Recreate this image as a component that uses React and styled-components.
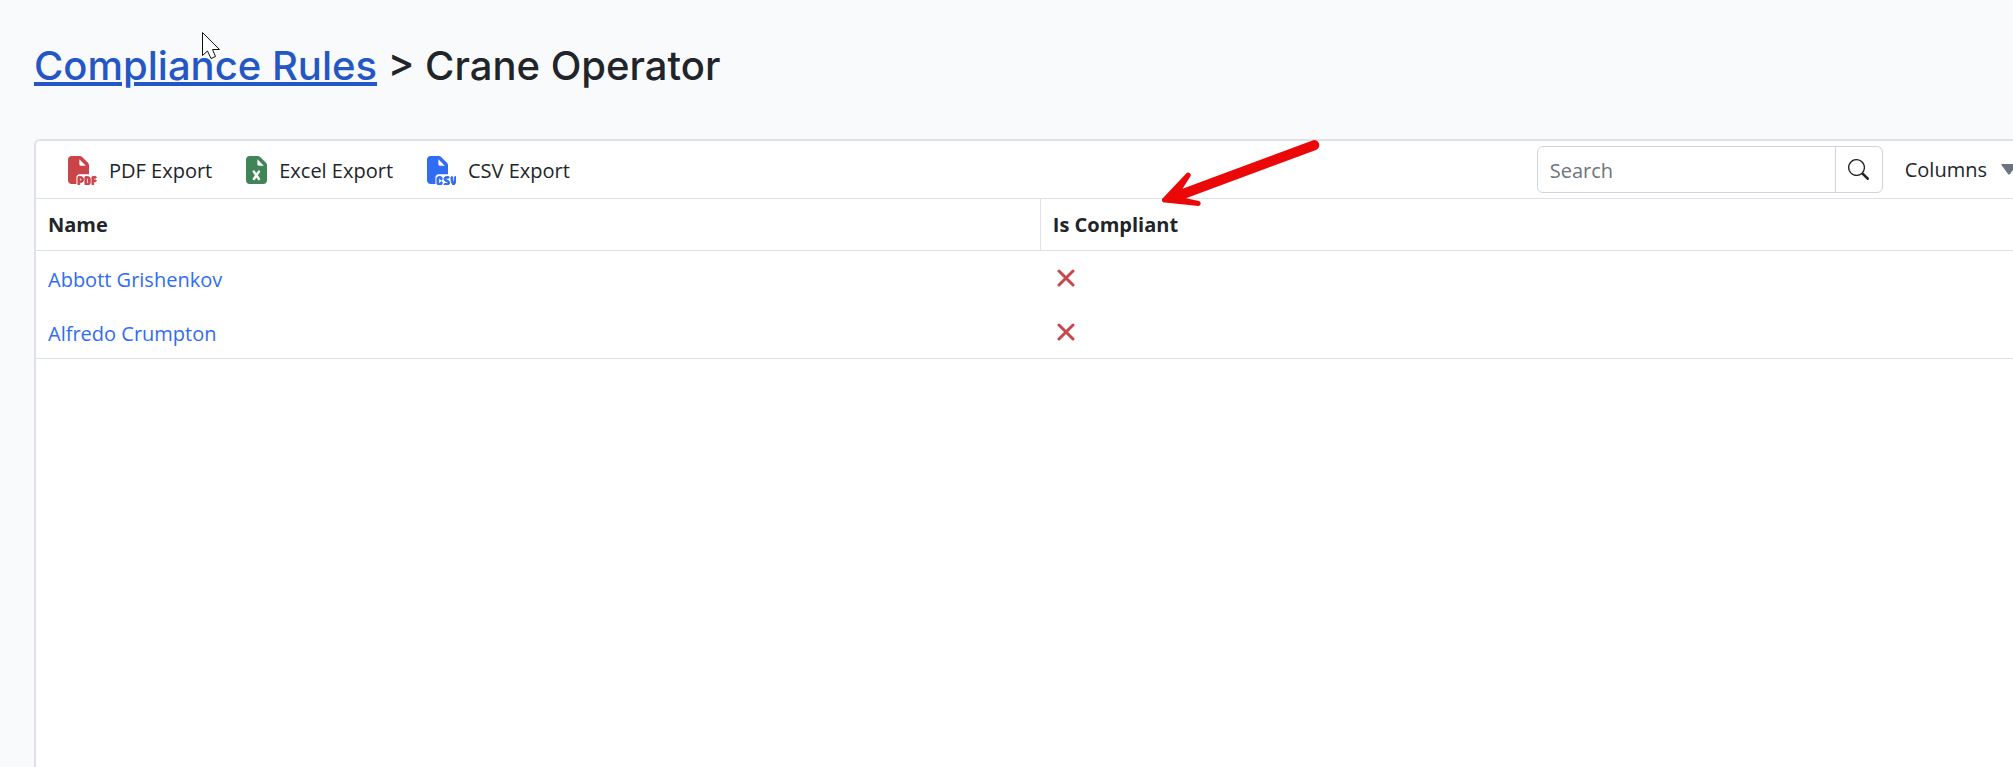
import React from 'react'
import styled, { createGlobalStyle } from 'styled-components'
import { FaFilePdf, FaFileCsv } from 'react-icons/fa6'
import { BsSearch } from 'react-icons/bs'

const people = [
    { name: 'Abbott Grishenkov', compliant: false },
    { name: 'Alfredo Crumpton', compliant: false },
]

// the page body of the document, with the lower right corner left free for the file type
const cutPage = 'M64 0C28.7 0 0 28.7 0 64L0 448c0 35.3 28.7 64 64 64l90 0 0-124c0-32 24-56 56-56l174 0 0-161.500c0-17-6.7-33.3-18.7-45.3L258.7 18.7C246.7 6.7 230.5 0 213.5 0L64 0zM325.5 176L232 176c-13.3 0-24-10.7-24-24l0-93.5L325.5 176z'
const fullPage = 'M0 64C0 28.7 28.7 0 64 0L213.5 0c17 0 33.3 6.7 45.3 18.7L365.3 125.3c12 12 18.7 28.3 18.7 45.3L384 448c0 35.3-28.7 64-64 64L64 512c-35.3 0-64-28.7-64-64L0 64zm208-5.5l0 93.5c0 13.3 10.7 24 24 24L325.5 176 208 58.5z'

function TypedFileIcon({ id, color, label: Label }) {
    return <FileSvg viewBox="0 0 530 530" width="29" height="29" color={color} aria-hidden="true">
        <clipPath id={id}><rect x="124" y="330" width="400" height="200" /></clipPath>
        <path d={cutPage} />
        <g clipPath={`url(#${id})`} transform="translate(22 22)">
            <Label size={512} stroke="currentColor" strokeWidth="18" />
        </g>
    </FileSvg>
}

function ExcelIcon({ color }) {
    return <FileSvg viewBox="0 0 384 530" width="21" height="29" color={color} aria-hidden="true">
        <path d={fullPage} />
        <path d="M144 286L236 420M236 286L144 420" fill="none" stroke="#fff" strokeWidth="46" strokeLinecap="round" />
    </FileSvg>
}

export default function App() {
    return <Page>
        <GlobalStyle />
        <Title><TitleLink href="#rules">Compliance Rules</TitleLink> &gt; Crane Operator</Title>
        <Card>
            <Toolbar>
                <Exports>
                    <ToolButton type="button"><TypedFileIcon id="pdf" color="#cb444a" label={FaFilePdf} />PDF Export</ToolButton>
                    <ToolButton type="button"><ExcelIcon color="#3f8558" />Excel Export</ToolButton>
                    <ToolButton type="button"><TypedFileIcon id="csv" color="#316cf4" label={FaFileCsv} />CSV Export</ToolButton>
                </Exports>
                <SearchGroup>
                    <SearchInput type="text" placeholder="Search" aria-label="Search" />
                    <SearchButton type="button" aria-label="Search"><BsSearch size={21} /></SearchButton>
                </SearchGroup>
                <ColumnsButton type="button">Columns
                    <Caret viewBox="0 0 16 11" width="16" height="11" aria-hidden="true"><path d="M1 0h14q1 0 .6 1L9 10q-1 1-2 0L.4 1Q0 0 1 0z" /></Caret>
                </ColumnsButton>
            </Toolbar>
            <Table>
                <thead>
                    <tr>
                        <HeadCell scope="col">Name</HeadCell>
                        <HeadCell scope="col">Is Compliant</HeadCell>
                    </tr>
                </thead>
                <tbody>
                    {people.map(person => <tr key={person.name}>
                        <Cell><PersonLink href="#person">{person.name}</PersonLink></Cell>
                        <Cell>{!person.compliant && <Cross viewBox="0 0 18 18" width="18" height="18" role="img" aria-label="No"><path d="M2 2L16 16M16 2L2 16" /></Cross>}</Cell>
                    </tr>)}
                </tbody>
            </Table>
        </Card>
        <Arrow viewBox="0 0 160 70" width="160" height="70" aria-hidden="true">
            <path d="M150.500 1.400A5 5 0 0 1 154 11L24 59.300L37 62A2.600 2.600 0 0 1 36.500 67L3 63.500A2.500 2.500 0 0 1 1 59L24 34.800A2.500 2.500 0 0 1 28.300 37.500L20.500 49.700Z" />
        </Arrow>
        <Pointer viewBox="0 0 19 28" width="19" height="28" aria-hidden="true">
            <path d="M.5.5v23l5-4.500 3.500 7.500 4.500-2-3-7h7z" />
        </Pointer>
    </Page>
}

const GlobalStyle = createGlobalStyle`
*, *::before, *::after {
    box-sizing: border-box;
}
body {
    margin: 0;
    overflow-x: hidden;
    background: #f9fafc;
    color: #212529;
    font-family: "Segoe UI", "Open Sans", sans-serif;
    font-size: 20px;
    line-height: 30px;
}
`

const Page = styled.div`
display: flex;
flex-direction: column;
position: relative;
min-height: 100vh;
padding: 42px 0 0 34px;
`

const Title = styled.h1`
margin: 0 0 49px;
font-family: Inter, sans-serif;
font-size: 40px;
font-weight: 500;
line-height: 48px;
`

const TitleLink = styled.a`
color: #2557c4;
`

const Card = styled.main`
flex: 1;
border: 2px solid #dee2e6;
border-width: 2px 0 0 2px;
border-radius: 6px 0 0 0;
background: #fff;
`

const Toolbar = styled.div`
display: flex;
align-items: center;
height: 58px;
border-bottom: 1px solid #dee2e6;
padding-left: 32px;
`

const Exports = styled.div`
display: flex;
gap: 34px;
flex: 1;
padding-top: 2px;
`

const ToolButton = styled.button`
display: flex;
align-items: center;
gap: 12px;
border: 0;
padding: 0;
background: none;
color: inherit;
font: inherit;
white-space: nowrap;
`

const ColumnsButton = styled(ToolButton)`
gap: 14px;
`

const FileSvg = styled.svg`
flex: none;
fill: currentColor;
`

const Caret = styled.svg`
flex: none;
margin-right: -4px;
fill: #6c757d;
`

const SearchGroup = styled.div`
display: flex;
height: 47px;
margin-right: 22px;
border: 1px solid #ced4da;
border-radius: 6px;
`

const SearchInput = styled.input`
width: 298px;
border: 0;
border-right: 1px solid #ced4da;
border-radius: 6px 0 0 6px;
padding: 3px 12px 0;
color: inherit;
font: inherit;
&::placeholder {
    color: #6c757d;
    opacity: 1;
}
`

const SearchButton = styled.button`
display: flex;
align-items: center;
justify-content: center;
width: 46px;
border: 0;
padding: 0;
background: none;
color: inherit;
`

const Table = styled.table`
width: 100%;
table-layout: fixed;
border-collapse: collapse;
border-bottom: 1px solid #dee2e6;
`

const HeadCell = styled.th`
height: 51px;
border-bottom: 1px solid #dee2e6;
padding: 2px 12px 0;
font-weight: 700;
text-align: left;
&:first-child {
    width: 50.8%;
}
& + & {
    border-left: 1px solid #dee2e6;
}
`

const Cell = styled.td`
height: 54px;
padding: 6px 12px 0;
`

const PersonLink = styled.a`
color: #316cf4;
text-decoration: none;
`

const Cross = styled.svg`
display: block;
margin: 0 0 4px 5px;
fill: none;
stroke: #cb444a;
stroke-width: 3;
stroke-linecap: round;
`

const Arrow = styled.svg`
position: absolute;
top: 139px;
left: 1162px;
fill: #ea0808;
`

const Pointer = styled.svg`
position: absolute;
top: 32px;
left: 202px;
fill: #fff;
stroke: #111;
`
